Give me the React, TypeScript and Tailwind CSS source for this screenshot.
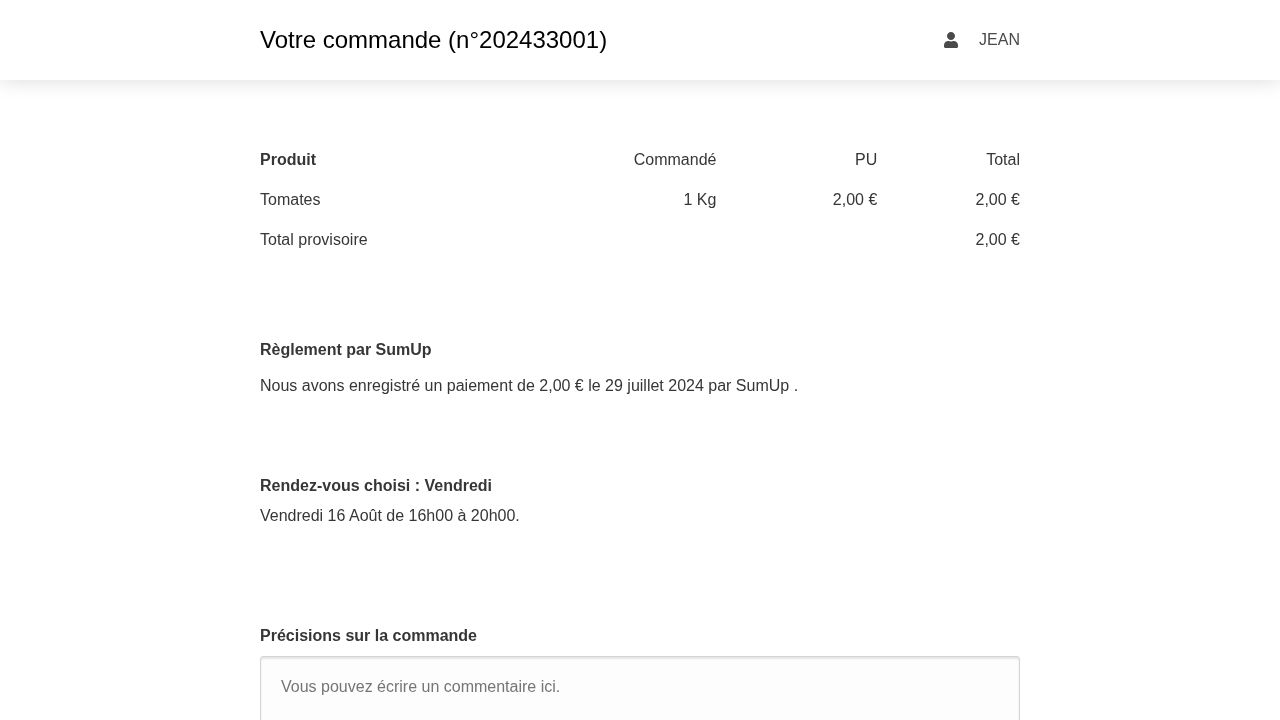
import React from 'react';
import { FaUser } from 'react-icons/fa';

const rows = [
    { name: 'Tomates', qty: '1 Kg', unit: '2,00 €', total: '2,00 €' },
    { name: 'Total provisoire', qty: '', unit: '', total: '2,00 €' },
];

const App: React.FC = () => {
    return (
        <div className="min-h-screen bg-white font-['Liberation_Sans',Arial,sans-serif] text-base text-[#363636]">
            <header className="h-20 bg-white shadow-[0_0_20px_rgba(0,0,0,0.15)]">
                <div className="mx-auto flex h-full w-[760px] items-center justify-between will-change-transform">
                    <h1 className="text-2xl font-normal text-black">Votre commande (n°202433001)</h1>
                    <div className="flex items-center gap-[21px] text-[#4a4a4a]">
                        <FaUser className="h-4 w-[14px]" />
                        <span>JEAN</span>
                    </div>
                </div>
            </header>

            <main className="mx-auto w-[760px] pt-[60px] will-change-transform">
                {/* Order table */}
                <div className="grid grid-cols-[1fr_160px_160.9px_142.7px]">
                    <div className="flex h-10 items-center font-bold">Produit</div>
                    <div className="flex h-10 items-center justify-end">Commandé</div>
                    <div className="flex h-10 items-center justify-end">PU</div>
                    <div className="flex h-10 items-center justify-end">Total</div>
                    {rows.map(row => (
                        <React.Fragment key={row.name}>
                            <div className="flex h-10 items-center">{row.name}</div>
                            <div className="flex h-10 items-center justify-end">{row.qty}</div>
                            <div className="flex h-10 items-center justify-end">{row.unit}</div>
                            <div className="flex h-10 items-center justify-end">{row.total}</div>
                        </React.Fragment>
                    ))}
                </div>

                <section className="mt-[78px]">
                    <h2 className="text-base leading-6 font-bold">Règlement par SumUp</h2>
                    <p className="mt-3 leading-6">Nous avons enregistré un paiement de 2,00 € le 29 juillet 2024 par SumUp .</p>
                </section>

                <section className="mt-[76px]">
                    <h2 className="text-base leading-6 font-bold">Rendez-vous choisi : Vendredi</h2>
                    <p className="mt-1.5 leading-6">Vendredi 16 Août de 16h00 à 20h00.</p>
                </section>

                <section className="mt-[96px] pb-10">
                    <h2 className="text-base leading-6 font-bold">Précisions sur la commande</h2>
                    <textarea
                        readOnly
                        placeholder="Vous pouvez écrire un commentaire ici."
                        className="mt-2 block h-[120px] w-full resize-none rounded-[3px] border border-[#d4d4d4] bg-[#fdfdfd] px-5 py-[18px] text-base leading-6 shadow-[inset_0_2px_2px_rgba(0,0,0,0.1)] outline-none placeholder:text-[#757575]"
                    />
                </section>
            </main>
        </div>
    );
};

export default App;
